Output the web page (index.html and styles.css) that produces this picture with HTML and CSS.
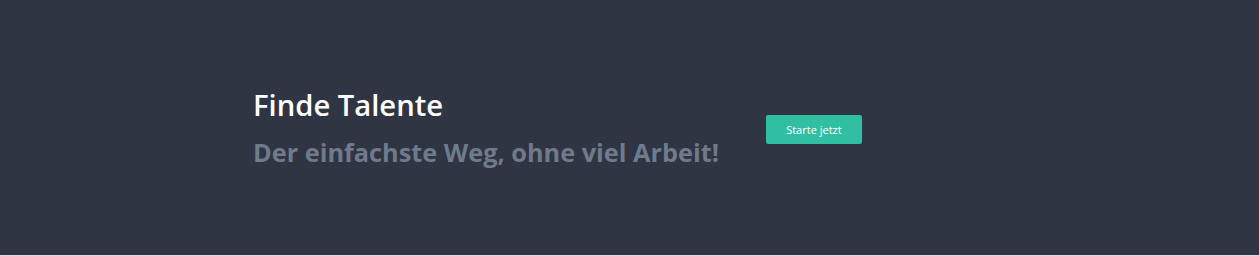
FILE: index.html
```html
<!DOCTYPE html>
<html lang="de">
<head>
<meta charset="utf-8">
<title>Finde Talente</title>
<link rel="stylesheet" href="styles.css">
</head>
<body>
<section class="hero">
  <div class="hero-inner">
    <div class="hero-text">
      <h1 class="title">Finde Talente</h1>
      <h2 class="subtitle">Der einfachste Weg, ohne viel Arbeit!</h2>
    </div>
    <a class="cta" href="#">Starte jetzt</a>
  </div>
</section>
</body>
</html>
```

FILE: styles.css
```css
html, body {
  margin: 0;
  padding: 0;
  background: #d9dce0;
}
body {
  font-family: "Open Sans", "Noto Sans", sans-serif;
}
.hero {
  background: #2f3542;
  height: 255px;
  display: flex;
  align-items: center;
}
.hero-inner {
  display: flex;
  align-items: center;
  padding-left: 253px;
  gap: 47px;
}
.hero-text {
  display: flex;
  flex-direction: column;
  gap: 12px;
}
.title {
  margin: 0;
  color: #ffffff;
  font-size: 29.2px;
  font-weight: 600;
  line-height: 36px;
}
.subtitle {
  margin: 0;
  color: #6f7a8c;
  font-size: 25.3px;
  font-weight: 700;
  line-height: 34px;
}
.cta {
  display: inline-flex;
  align-items: center;
  justify-content: center;
  width: 96px;
  height: 29px;
  margin-top: 3px;
  background: #31bfa3;
  color: #ffffff;
  font-size: 11px;
  text-decoration: none;
  border-radius: 2px;
}
```
